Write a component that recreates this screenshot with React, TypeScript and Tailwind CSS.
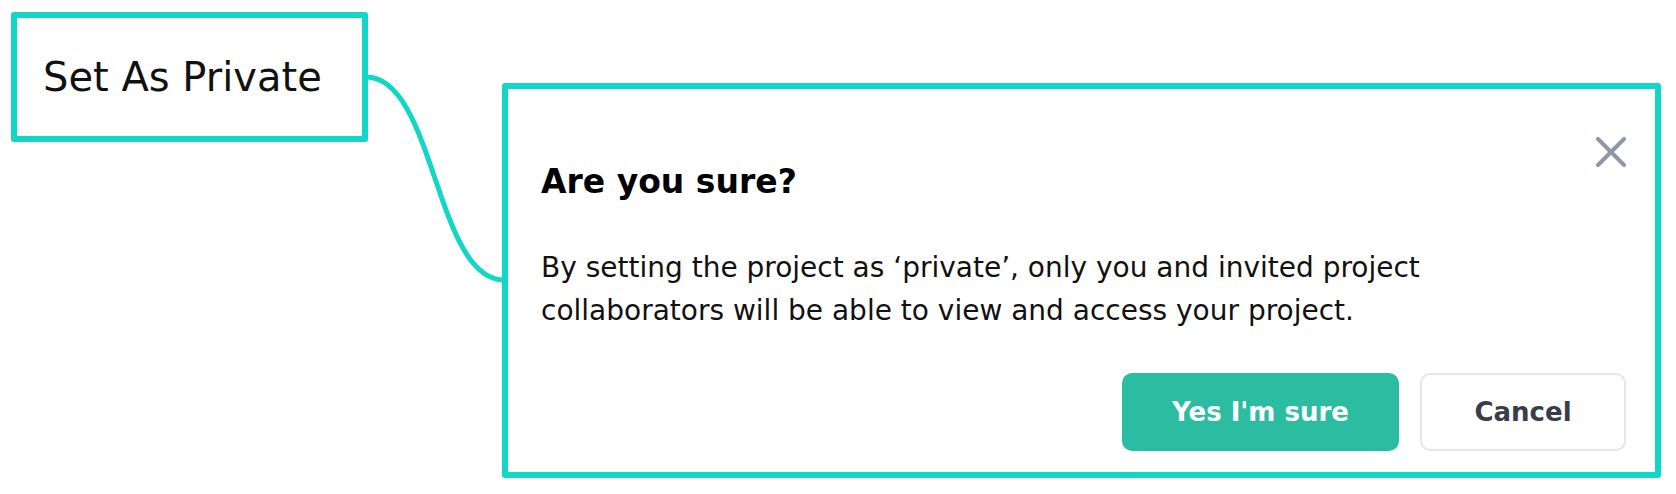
export default function App() {
  return (
    <div className="w-[1676px] h-[494px] bg-white flex items-start pl-[11px] pt-[12px] font-['DejaVu_Sans',sans-serif] overflow-hidden">
      <div className="w-[357px] h-[130px] shrink-0 border-[6px] border-[#12d7c7] rounded-[3px] flex items-center pl-[26px]">
        <span className="text-[40px] leading-none text-[#111111] whitespace-nowrap">Set As Private</span>
      </div>
      <svg width="134" height="290" viewBox="0 0 134 290" className="shrink-0 overflow-visible">
        <path d="M-2 65 C67 65 67 268 136 268" fill="none" stroke="#12d7c7" strokeWidth="5" />
      </svg>
      <div className="relative mt-[71px] w-[1159px] shrink-0 border-[6px] border-[#12d7c7] rounded-[3px] bg-white pl-[33px] pr-[29px] pt-[73px] pb-[21px] flex flex-col">
        <button className="absolute top-[48px] right-[29px] w-[30px] h-[30px]" aria-label="Close">
          <svg width="30" height="30" viewBox="0 0 30 30" fill="none" stroke="#8f96a8" strokeWidth="4" strokeLinecap="round">
            <path d="M2 2 L28 28 M28 2 L2 28" />
          </svg>
        </button>
        <h2 className="text-[33px] leading-[40px] font-bold text-black whitespace-nowrap">Are you sure?</h2>
        <p className="mt-[44px] text-[28px] leading-[43px] text-[#111111] whitespace-nowrap">
          By setting the project as ‘private’, only you and invited project
          <br />
          collaborators will be able to view and access your project.
        </p>
        <div className="mt-[41px] flex justify-end gap-[21px]">
          <button className="w-[277px] h-[78px] rounded-[10px] bg-[#2cbca2] text-white font-bold text-[26px]">
            Yes I'm sure
          </button>
          <button className="w-[206px] h-[78px] rounded-[10px] border-2 border-[#e3e6ec] bg-white text-[#373d4b] font-bold text-[26px]">
            Cancel
          </button>
        </div>
      </div>
    </div>
  );
}
